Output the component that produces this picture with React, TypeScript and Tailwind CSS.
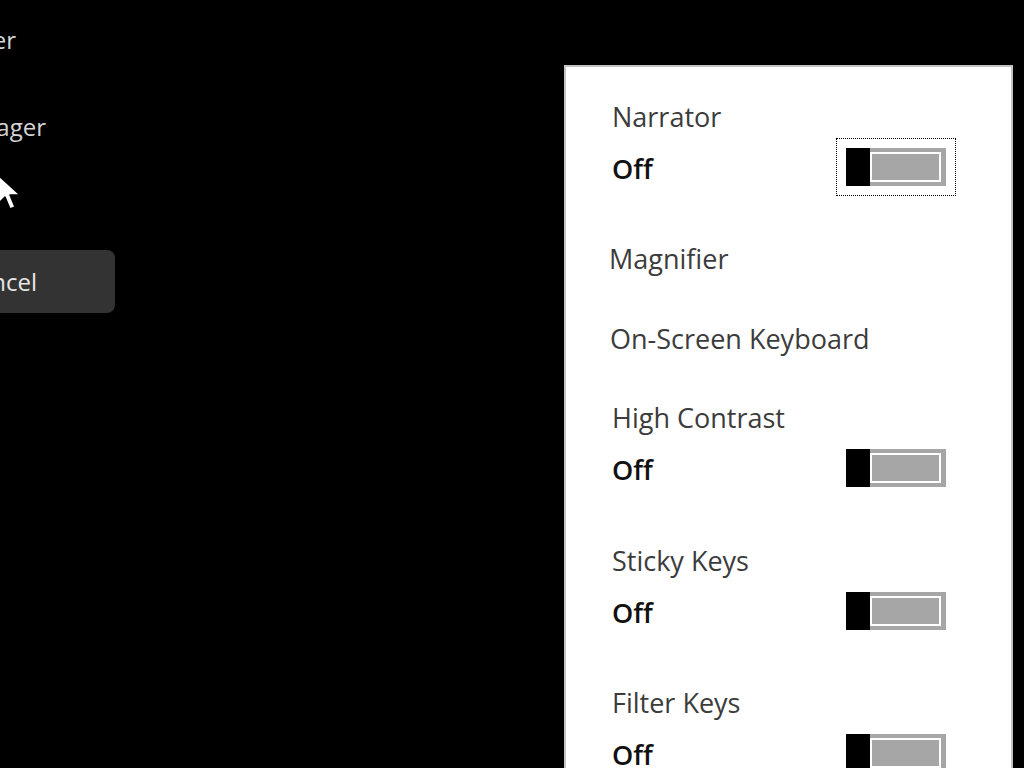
import React from "react";

function Toggle({ focused }: { focused?: boolean }) {
  return (
    <div
      className={
        "mb-[5px] flex h-[38px] w-[100px] bg-[#a6a6a6] " +
        (focused ? "outline-1 outline-dotted outline-black outline-offset-[9px]" : "")
      }
    >
      <div className="h-full w-[24px] bg-black" />
      <div className="flex-1 py-[4px] pr-[5px]">
        <div className="h-full border-2 border-white bg-[#a6a6a6]" />
      </div>
    </div>
  );
}

function Title({ children }: { children: React.ReactNode }) {
  return (
    <div className="flex h-[52px] items-center text-[27px] font-normal text-[#3c3c3c]">
      {children}
    </div>
  );
}

function OffRow({ focused }: { focused?: boolean }) {
  return (
    <div className="flex h-[52px] items-center justify-between pr-[65px]">
      <span className="text-[27px] font-semibold text-[#111111]">Off</span>
      <Toggle focused={focused} />
    </div>
  );
}

export default function App() {
  return (
    <div
      className="relative flex h-[768px] w-[1024px] overflow-hidden bg-black"
      style={{ fontFamily: '"Open Sans", "Noto Sans", sans-serif' }}
    >
      <div className="flex flex-1 flex-col">
        <div className="mt-[22px] flex h-[36px] w-[16px] items-center justify-end whitespace-nowrap text-[24px] text-[#d4d4d4]">
          Switch user
        </div>
        <div className="mt-[51px] flex h-[36px] w-[46px] items-center justify-end whitespace-nowrap text-[24px] text-[#d4d4d4]">
          Task Manager
        </div>
        <div className="mt-[105px] flex h-[63px] w-[115px] items-center justify-end whitespace-nowrap rounded-r-lg bg-[#333333] pr-[78px] text-[24px] text-[#e6e6e6]">
          Cancel
        </div>
      </div>

      <svg
        className="absolute left-[-4px] top-[174px]"
        width="28"
        height="40"
        viewBox="0 0 28 40"
      >
        <path
          d="M2 1 L2 30 L9 23 L14 35 L19 33 L14 21 L24 21 Z"
          fill="white"
          stroke="black"
          strokeWidth="1.5"
          strokeLinejoin="round"
        />
      </svg>

      <div className="mr-[11px] mt-[65px] h-[720px] w-[449px] shrink-0 border-2 border-[#c3c3c3] bg-white pl-[46px] pt-[24px]">
        <Title>Narrator</Title>
        <OffRow focused />
        <div className="mt-[38px] -ml-[3px]">
          <Title>Magnifier</Title>
        </div>
        <div className="mt-[28px] -ml-[2px]">
          <Title>On-Screen Keyboard</Title>
        </div>
        <div className="mt-[27px]">
          <Title>High Contrast</Title>
          <OffRow />
        </div>
        <div className="mt-[39px]">
          <Title>Sticky Keys</Title>
          <OffRow />
        </div>
        <div className="mt-[38px]">
          <Title>Filter Keys</Title>
          <OffRow />
        </div>
      </div>
    </div>
  );
}
